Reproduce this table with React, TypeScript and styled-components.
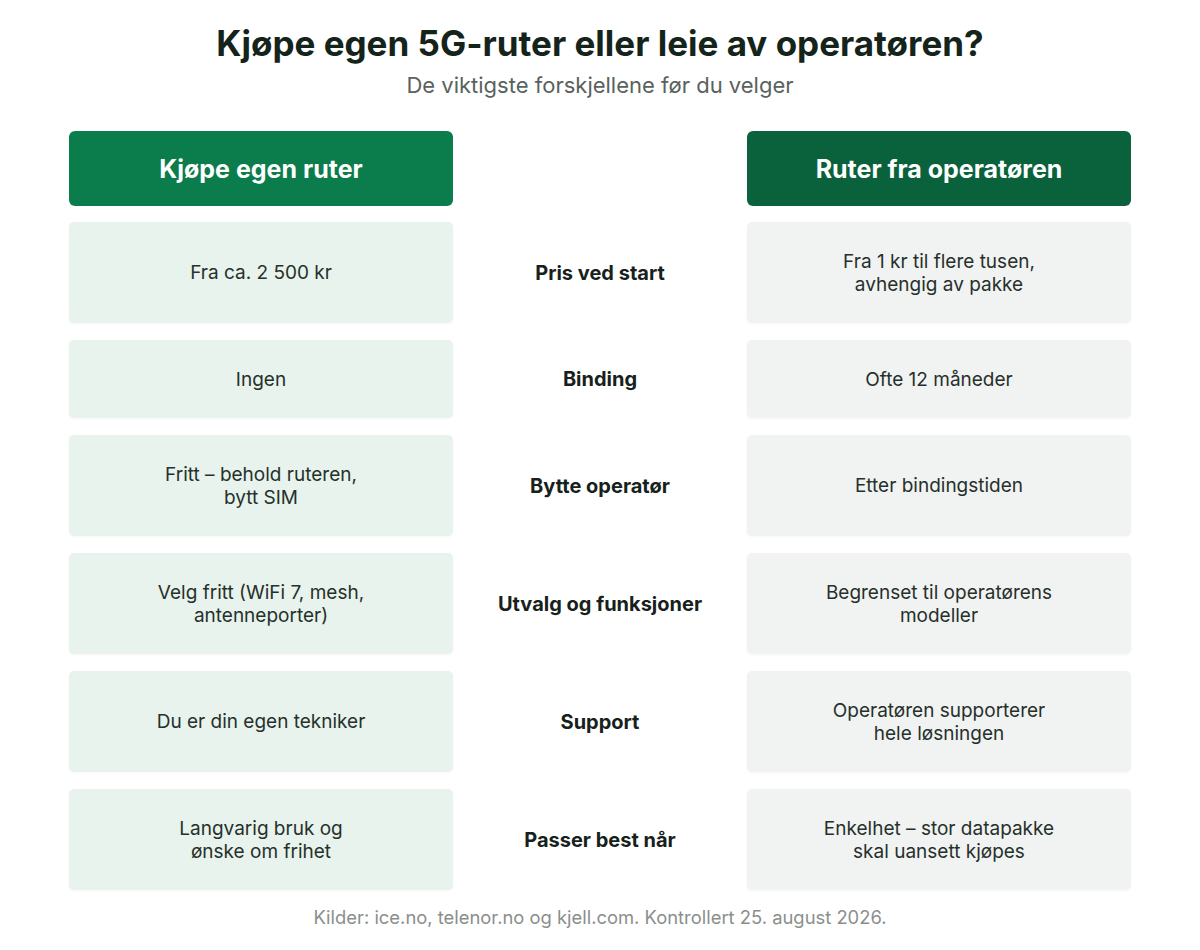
import React from "react";
import styled, { createGlobalStyle } from "styled-components";

type Row = {
  label: string;
  own: React.ReactNode;
  operator: React.ReactNode;
};

const rows: Array<Row> = [
  {
    label: "Pris ved start",
    own: "Fra ca. 2 500 kr",
    operator: (
      <>
        Fra 1 kr til flere tusen,
        <br />
        avhengig av pakke
      </>
    ),
  },
  { label: "Binding", own: "Ingen", operator: "Ofte 12 måneder" },
  {
    label: "Bytte operatør",
    own: (
      <>
        Fritt – behold ruteren,
        <br />
        bytt SIM
      </>
    ),
    operator: "Etter bindingstiden",
  },
  {
    label: "Utvalg og funksjoner",
    own: (
      <>
        Velg fritt (WiFi 7, mesh,
        <br />
        antenneporter)
      </>
    ),
    operator: (
      <>
        Begrenset til operatørens
        <br />
        modeller
      </>
    ),
  },
  {
    label: "Support",
    own: "Du er din egen tekniker",
    operator: (
      <>
        Operatøren supporterer
        <br />
        hele løsningen
      </>
    ),
  },
  {
    label: "Passer best når",
    own: (
      <>
        Langvarig bruk og
        <br />
        ønske om frihet
      </>
    ),
    operator: (
      <>
        Enkelhet – stor datapakke
        <br />
        skal uansett kjøpes
      </>
    ),
  },
];

const App = () => (
  <>
    <GlobalStyle />
    <StyledPage>
      <StyledTitle>Kjøpe egen 5G-ruter eller leie av operatøren?</StyledTitle>
      <StyledSubtitle>De viktigste forskjellene før du velger</StyledSubtitle>
      <StyledGrid>
        <StyledHeader tone="own">Kjøpe egen ruter</StyledHeader>
        <div />
        <StyledHeader tone="operator">Ruter fra operatøren</StyledHeader>
        {rows.map((row) => (
          <React.Fragment key={row.label}>
            <StyledCell tone="own">{row.own}</StyledCell>
            <StyledLabel>{row.label}</StyledLabel>
            <StyledCell tone="operator">{row.operator}</StyledCell>
          </React.Fragment>
        ))}
      </StyledGrid>
      <StyledSource>
        Kilder: ice.no, telenor.no og kjell.com. Kontrollert 25. august 2026.
      </StyledSource>
    </StyledPage>
  </>
);

const GlobalStyle = createGlobalStyle`
  body {
    margin: 0;
    background: #ffffff;
    font-family: Inter, "Noto Sans", sans-serif;
    color: #17231c;
  }
`;

const StyledPage = styled.div`
  width: 1200px;
  padding: 21px 69px 0;
  box-sizing: border-box;
  display: flex;
  flex-direction: column;
  align-items: center;
`;

const StyledTitle = styled.h1`
  margin: 0;
  font-size: 35px;
  line-height: 44px;
  font-weight: 700;
  color: #15241b;
`;

const StyledSubtitle = styled.p`
  margin: 7px 0 0;
  font-size: 22px;
  line-height: 26px;
  color: #59625d;
`;

const StyledGrid = styled.div`
  margin-top: 33px;
  width: 100%;
  display: grid;
  grid-template-columns: 384px 1fr 384px;
  row-gap: 17px;
`;

const StyledHeader = styled.div<{ tone: "own" | "operator" }>`
  height: 75px;
  margin-bottom: -1px;
  border-radius: 6px;
  background: ${(p) => (p.tone === "own" ? "#0b7c4b" : "#09623b")};
  color: #ffffff;
  font-size: 25px;
  font-weight: 700;
  display: flex;
  align-items: center;
  justify-content: center;
`;

const StyledCell = styled.div<{ tone: "own" | "operator" }>`
  padding: 27.5px 16px;
  border-radius: 5px;
  background: ${(p) => (p.tone === "own" ? "#e7f3ec" : "#f1f3f2")};
  box-shadow: 0 1px 3px rgba(0, 0, 0, 0.04);
  font-size: 19px;
  line-height: 23px;
  color: #26302b;
  text-align: center;
  display: flex;
  align-items: center;
  justify-content: center;
`;

const StyledLabel = styled.div`
  display: flex;
  align-items: center;
  justify-content: center;
  font-size: 20px;
  font-weight: 700;
  color: #17211b;
`;

const StyledSource = styled.p`
  margin: 16px 0 0;
  font-size: 18.4px;
  line-height: 22px;
  color: #8a8f8c;
`;

export default App;
